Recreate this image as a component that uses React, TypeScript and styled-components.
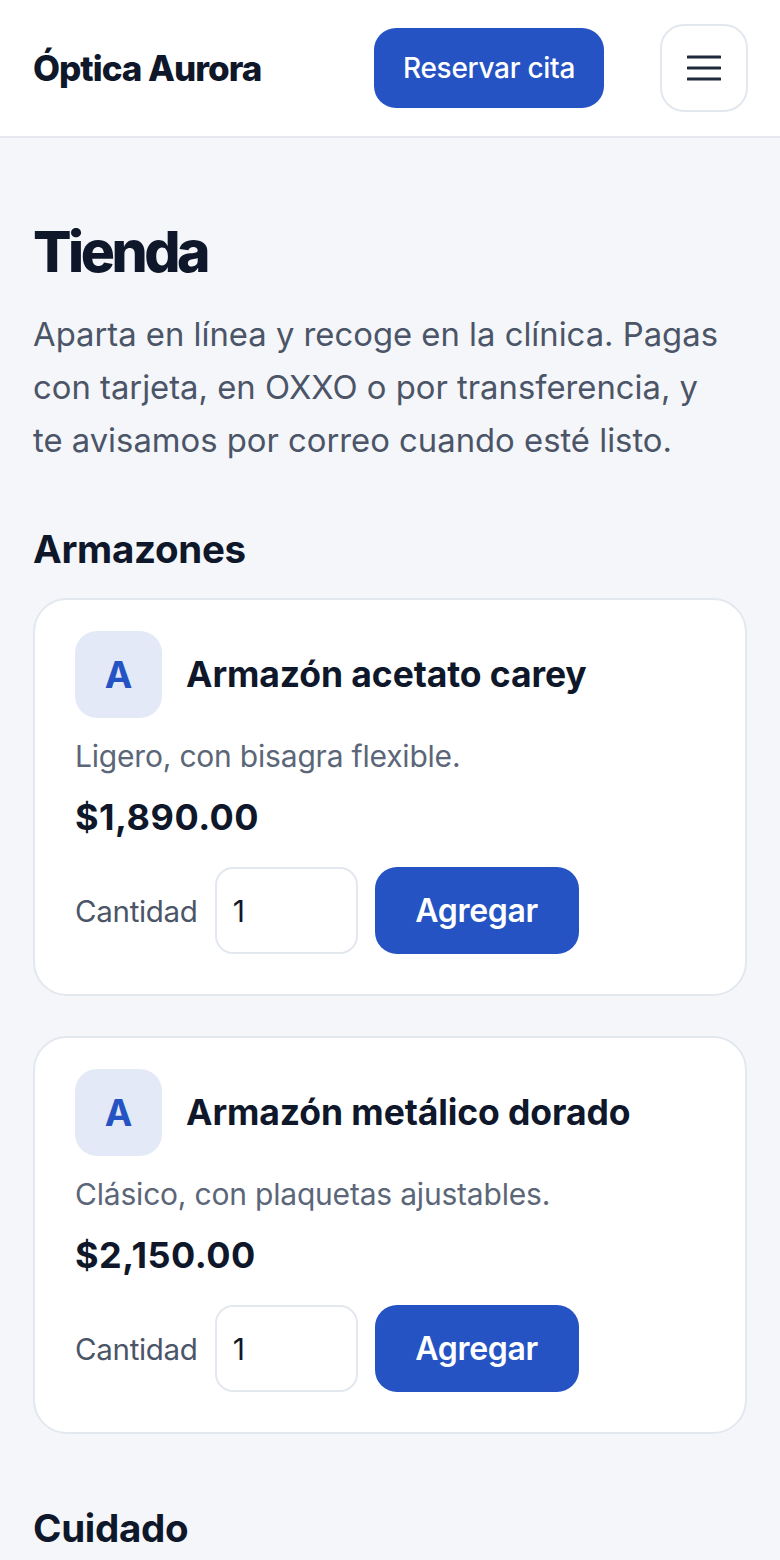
import React, { useState } from 'react'
import styled, { createGlobalStyle } from 'styled-components'

const GlobalStyle = createGlobalStyle`
  * { box-sizing: border-box; }
  body {
    margin: 0;
    background: #f4f6fa;
    font-family: Inter, "Noto Sans", "Liberation Sans", sans-serif;
    color: #0f172a;
  }
`

const Header = styled('header')`
  display: flex;
  align-items: center;
  justify-content: space-between;
  height: 138px;
  padding: 0 32px 0 33px;
  background: #fff;
  border-bottom: 2px solid #e5e8ee;
`

const Logo = styled('a')`
  font-size: 35px;
  font-weight: 800;
  letter-spacing: -1px;
  color: #0f172a;
`

const HeaderActions = styled('div')`
  display: flex;
  align-items: center;
  gap: 56px;
`

const BookButton = styled('button')`
  height: 80px;
  width: 230px;
  border: 0;
  border-radius: 22px;
  background: #2553c3;
  color: #fff;
  font-family: inherit;
  font-size: 28px;
  font-weight: 500;
  letter-spacing: -0.3px;
`

const MenuButton = styled('button')`
  width: 88px;
  height: 88px;
  border: 2px solid #e3e8ef;
  border-radius: 24px;
  background: #fff;
  display: flex;
  align-items: center;
  justify-content: center;
  padding: 0;
`

const Main = styled('main')`
  padding: 78px 33px 0;
`

const Title = styled('h1')`
  margin: 0;
  font-size: 57px;
  font-weight: 800;
  letter-spacing: -3.5px;
  line-height: 72px;
`

const Lead = styled('p')`
  margin: 20px 0 0;
  max-width: 700px;
  font-size: 32.8px;
  line-height: 53px;
  color: #4b5567;
`

const SectionTitle = styled('h2')`
  margin: 58px 0 25px;
  font-size: 38.5px;
  font-weight: 700;
  letter-spacing: -0.3px;
  line-height: 48px;
`

const ProductList = styled('div')`
  display: flex;
  flex-direction: column;
  gap: 40px;

  & + h2 {
    margin-top: 70px;
  }
`

const Card = styled('article')`
  background: #fff;
  border: 2px solid #e3e8ef;
  border-radius: 34px;
  padding: 31px 40px 40px;
`

const CardHead = styled('div')`
  display: flex;
  align-items: center;
  gap: 24px;
`

const Initial = styled('div')`
  width: 87px;
  height: 87px;
  border-radius: 22px;
  background: #e3e9f6;
  color: #2553c3;
  font-size: 37px;
  font-weight: 700;
  display: flex;
  align-items: center;
  justify-content: center;
`

const Name = styled('h3')`
  margin: 0;
  font-size: 35.5px;
  font-weight: 700;
  letter-spacing: -0.1px;
`

const Desc = styled('p')`
  margin: 18px 0 0;
  font-size: 30px;
  line-height: 40px;
  color: #5b6678;
  letter-spacing: -0.2px;
`

const Price = styled('div')`
  margin-top: 19px;
  font-size: 36px;
  line-height: 44px;
  font-weight: 700;
  letter-spacing: 0.5px;
`

const BuyRow = styled('div')`
  margin-top: 28px;
  display: flex;
  align-items: center;
  gap: 17px;
`

const QtyLabel = styled('label')`
  font-size: 29.5px;
  color: #4b5567;
  letter-spacing: -0.3px;
`

const QtyInput = styled('input')`
  width: 143px;
  height: 87px;
  border: 2px solid #e3e8ef;
  border-radius: 18px;
  padding: 0 16px;
  font-family: inherit;
  font-size: 30px;
  color: #0f172a;
  background: #fff;
`

const AddButton = styled('button')`
  width: 204px;
  height: 87px;
  border: 0;
  border-radius: 22px;
  background: #2553c3;
  color: #fff;
  font-family: inherit;
  font-size: 32px;
  font-weight: 600;
  letter-spacing: -0.3px;
`

type Product = { name: string; desc: string; price: string }

const frames: Product[] = [
  { name: 'Armazón acetato carey', desc: 'Ligero, con bisagra flexible.', price: '$1,890.00' },
  { name: 'Armazón metálico dorado', desc: 'Clásico, con plaquetas ajustables.', price: '$2,150.00' },
]

function ProductCard({ p }: { p: Product }) {
  const [qty, setQty] = useState('1')
  return (
    <Card>
      <CardHead>
        <Initial>{p.name.charAt(0)}</Initial>
        <Name>{p.name}</Name>
      </CardHead>
      <Desc>{p.desc}</Desc>
      <Price>{p.price}</Price>
      <BuyRow>
        <QtyLabel>Cantidad</QtyLabel>
        <QtyInput value={qty} onChange={e => setQty(e.target.value)} />
        <AddButton>Agregar</AddButton>
      </BuyRow>
    </Card>
  )
}

export default function App() {
  return (
    <>
      <GlobalStyle />
      <Header>
        <Logo>Óptica Aurora</Logo>
        <HeaderActions>
          <BookButton>Reservar cita</BookButton>
          <MenuButton aria-label="Menú">
            <svg width="34" height="26" viewBox="0 0 34 26">
              <path d="M1 2h32M1 13h32M1 24h32" stroke="#1e293b" strokeWidth="3" strokeLinecap="round" />
            </svg>
          </MenuButton>
        </HeaderActions>
      </Header>
      <Main>
        <Title>Tienda</Title>
        <Lead>
          Aparta en línea y recoge en la clínica. Pagas con tarjeta, en OXXO o por transferencia, y te avisamos por
          correo cuando esté listo.
        </Lead>
        <SectionTitle>Armazones</SectionTitle>
        <ProductList>
          {frames.map(p => (
            <ProductCard key={p.name} p={p} />
          ))}
        </ProductList>
        <SectionTitle>Cuidado</SectionTitle>
      </Main>
    </>
  )
}
